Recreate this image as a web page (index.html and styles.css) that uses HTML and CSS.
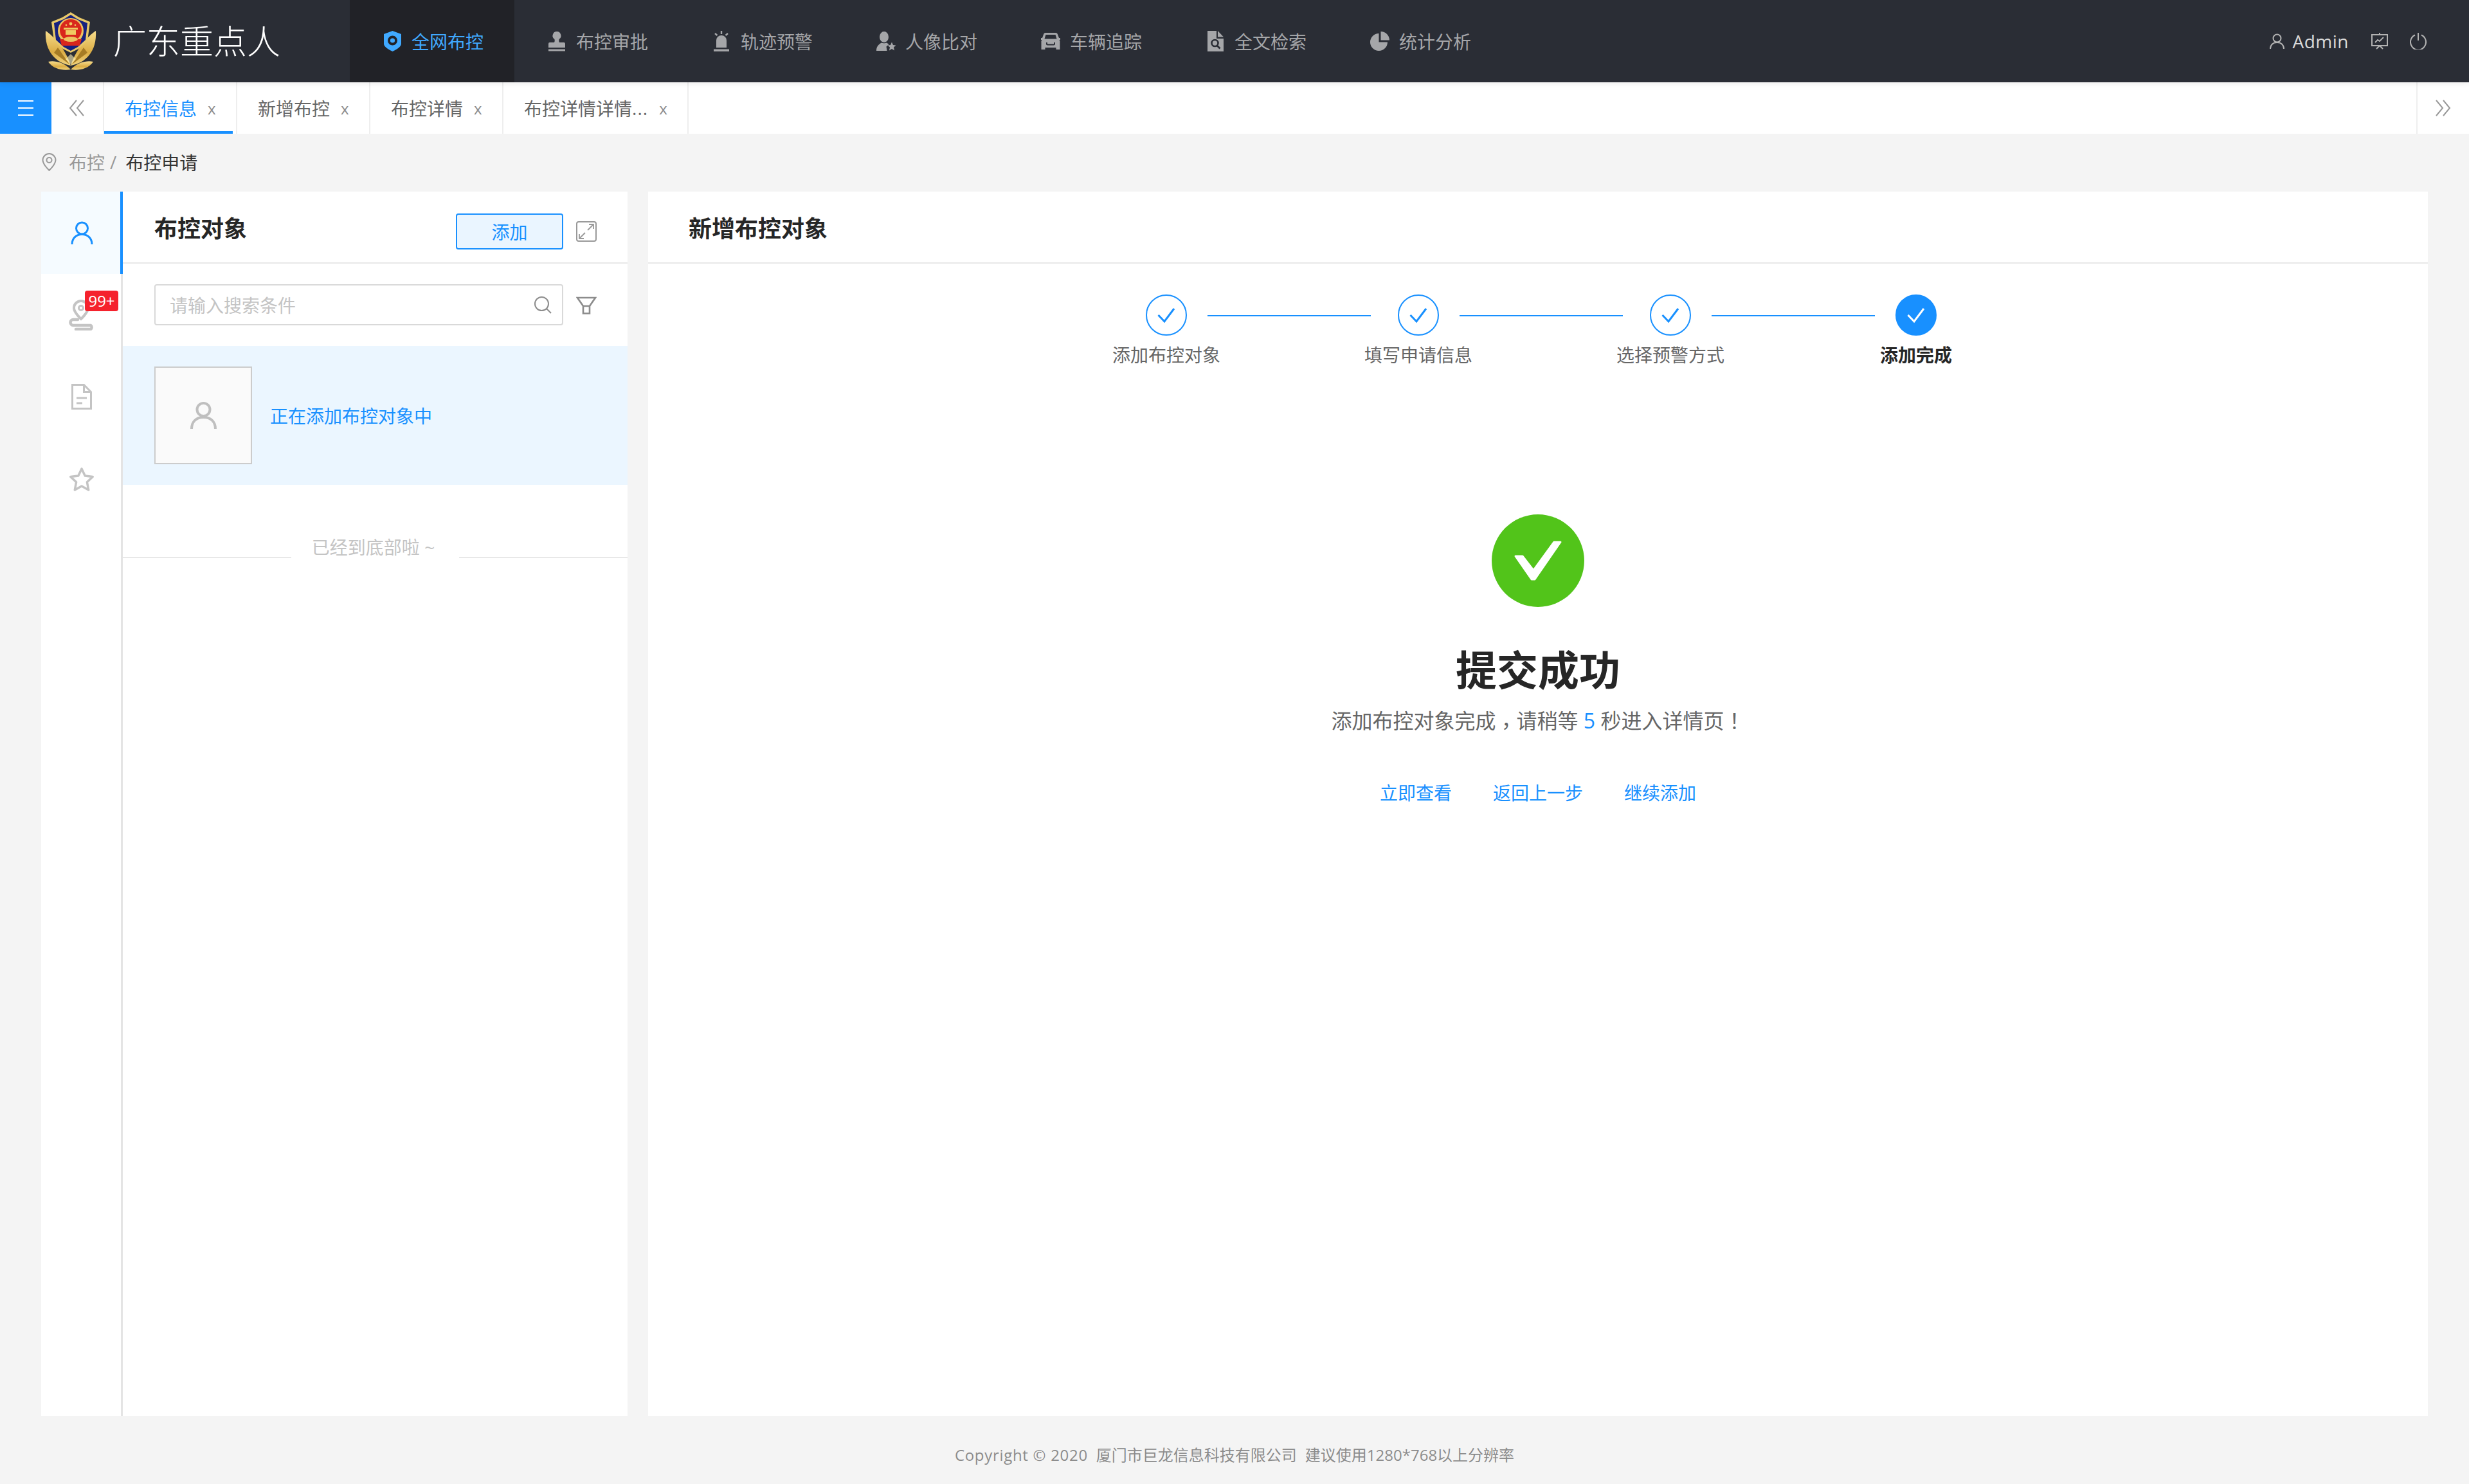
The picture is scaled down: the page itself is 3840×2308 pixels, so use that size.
FILE: index.html
```html
<!DOCTYPE html>
<html lang="zh-CN">
<head>
    <meta charset="UTF-8">
    <meta name="viewport" content="width=device-width, initial-scale=1.0">
    <title>广东重点人 - 布控申请</title>
    <link rel="stylesheet" href="styles.css">
</head>
<body>
    <header class="topbar">
        <div class="brand">
            <svg class="emblem" viewBox="0 0 100 100">
                <defs>
                    <linearGradient id="gold" x1="0" y1="0" x2="0" y2="1">
                        <stop offset="0" stop-color="#f6dc8c"/>
                        <stop offset="0.6" stop-color="#dcae45"/>
                        <stop offset="1" stop-color="#f0d27c"/>
                    </linearGradient>
                </defs>
                <path fill="url(#gold)" d="M50 88C27 84 9 66 11 34c12 8 30 26 39 54z"/>
                <path fill="url(#gold)" d="M50 88c23-4 41-22 39-54-12 8-30 26-39 54z"/>
                <path fill="#a67c25" d="M30 60l18 26-24-18zM70 60L52 86l24-18z"/>
                <path fill="url(#gold)" d="M50 94c-12-12-26-14-35-12 8 12 24 14 35 12zM50 94c12-12 26-14 35-12-8 12-24 14-35 12z"/>
                <path fill="#e8c869" d="M50 5l13 8 17 7-4 30-14 12-12 6-12-6-14-12-4-30 17-7z"/>
                <path fill="#16217f" d="M50 9l11 7 15 6-3 26-12 11-11 6-11-6-12-11-3-26 15-6z"/>
                <circle fill="#edc35f" cx="50" cy="34" r="20"/>
                <circle fill="#d9271c" cx="50" cy="33" r="17"/>
                <rect fill="#f0cc62" x="39" y="29" width="22" height="3"/>
                <rect fill="#f0cc62" x="42" y="33" width="16" height="7"/>
                <circle fill="#f0cc62" cx="50" cy="23" r="2.4"/>
                <circle fill="#f0cc62" cx="43" cy="25" r="1.3"/>
                <circle fill="#f0cc62" cx="57" cy="25" r="1.3"/>
                <path fill="#d9271c" d="M33 47h34l-3 10H36z"/>
                <ellipse fill="#edc35f" cx="50" cy="47" rx="11" ry="4"/>
                <path fill="#fff2b8" d="M42 78l8-8 8 8-8 8z" opacity=".6"/>
            </svg>
            <span class="brand-name">广东重点人</span>
        </div>
        <nav class="main-nav">
            <a class="nav-item active">
                <span class="nav-icon">
                    <svg width="27" height="32" viewBox="0 0 27 32"><path fill="currentColor" d="M13.5 0L27 5v15c0 4-5 8-13.5 12C5 28 0 24 0 20V5z"/><circle cx="13.5" cy="15" r="7.5" fill="#212227"/><circle cx="13.5" cy="15" r="3.6" fill="currentColor"/></svg>
                </span>全网布控
            </a>
            <a class="nav-item">
                <span class="nav-icon">
                    <svg width="26" height="31" viewBox="0 0 26 31"><path fill="currentColor" d="M13 0a6.5 6.5 0 0 1 4 11.6c-1 1.2-1 3.4 0 5.4h7a2 2 0 0 1 2 2v6H0v-6a2 2 0 0 1 2-2h7c1-2 1-4.2 0-5.4A6.5 6.5 0 0 1 13 0z"/><rect y="27.5" width="26" height="3" fill="currentColor"/></svg>
                </span>布控审批
            </a>
            <a class="nav-item">
                <span class="nav-icon">
                    <svg width="24" height="32" viewBox="0 0 24 32"><path fill="currentColor" d="M4 26V15a8 8 0 0 1 16 0v11z"/><rect y="28.5" width="24" height="3.5" fill="currentColor"/><path fill="none" stroke="currentColor" stroke-width="2.4" d="M12 0v5M2 4l3.5 3M22 4l-3.5 3"/></svg>
                </span>轨迹预警
            </a>
            <a class="nav-item">
                <span class="nav-icon">
                    <svg width="30" height="30" viewBox="0 0 30 30"><ellipse fill="currentColor" cx="12" cy="8.5" rx="7" ry="8.5"/><path fill="currentColor" d="M0 30c0-6 3-10 8-12.500 2 1 6 1 8 0l3.500 2.500-4 3.500 1 6.500z"/><path fill="currentColor" d="M24 16.500l2 4.500 4.500.5-3.500 3 1 5-4-2.500-4 2.500 1-5-3.500-3 4.500-.5z"/></svg>
                </span>人像比对
            </a>
            <a class="nav-item">
                <span class="nav-icon">
                    <svg width="30" height="26" viewBox="0 0 30 26"><path fill="currentColor" d="M7 0h16c1.500 0 2.500 1 3 2.500L28 8h2v3h-1.500l1 2v13h-6v-3H6.500v3h-6V13l1-2H0V8h2l2-5.500C4.500 1 5.500 0 7 0z"/><path fill="#2a2d35" d="M7.500 3h15l2 6.500h-19z"/><path fill="none" stroke="#2a2d35" stroke-width="2" d="M9 15v2q0 1.500 1.500 1.500h9q1.500 0 1.500-1.500v-2"/></svg>
                </span>车辆追踪
            </a>
            <a class="nav-item">
                <span class="nav-icon">
                    <svg width="25" height="32" viewBox="0 0 25 32"><path fill="currentColor" d="M0 0h14v12h11v20H0z"/><path fill="currentColor" d="M16 0l9 9.500h-9z"/><circle cx="11.500" cy="19" r="5" fill="none" stroke="#2a2d35" stroke-width="2.600"/><path stroke="#2a2d35" stroke-width="2.800" d="M15 23l4.500 4.500"/></svg>
                </span>全文检索
            </a>
            <a class="nav-item">
                <span class="nav-icon">
                    <svg width="30" height="30" viewBox="0 0 30 30"><path fill="currentColor" d="M13.500 3v13.500H27A13.500 13.500 0 1 1 13.500 3z"/><path fill="currentColor" d="M16.500 0A13.500 13.500 0 0 1 30 13.500H16.500z"/></svg>
                </span>统计分析
            </a>
        </nav>
        <div class="user-tools">
            <svg class="tool-user" width="23" height="24" viewBox="0 0 23 24"><circle cx="11.500" cy="7.500" r="6" fill="none" stroke="currentColor" stroke-width="2"/><path fill="none" stroke="currentColor" stroke-width="2" d="M1 24c0-6 4-10 10.500-10S22 18 22 24"/></svg>
            <span class="user-name">Admin</span>
            <svg class="tool-chart" width="26" height="26" viewBox="0 0 26 26"><path fill="none" stroke="currentColor" stroke-width="2" d="M1 3h24v17H1zM13 0v3M13 20l-5 5M13 20l5 5"/><path fill="none" stroke="currentColor" stroke-width="1.800" d="M6 15l4-4 3 2 6-6"/></svg>
            <svg class="tool-power" width="26" height="26" viewBox="0 0 26 26"><path fill="none" stroke="currentColor" stroke-width="2" d="M8 3.500a12 12 0 1 0 10 0M13 0v12"/></svg>
        </div>
    </header>

    <div class="tabbar">
        <button class="menu-btn">
            <span></span><span></span><span></span>
        </button>
        <div class="tab-arrow left">
            <svg width="24" height="26" viewBox="0 0 24 26"><path fill="none" stroke="currentColor" stroke-width="2" d="M12 1L2 13l10 12M23 1L13 13l10 12"/></svg>
        </div>
        <a class="tab active">布控信息<i>x</i></a>
        <a class="tab">新增布控<i>x</i></a>
        <a class="tab">布控详情<i>x</i></a>
        <a class="tab">布控详情详情<span class="tab-dots">...</span><i>x</i></a>
        <div class="tab-arrow right">
            <svg width="24" height="26" viewBox="0 0 24 26"><path fill="none" stroke="currentColor" stroke-width="2" d="M1 1l10 12L1 25M12 1l10 12-10 12"/></svg>
        </div>
    </div>

    <div class="breadcrumb">
        <svg width="23" height="28" viewBox="0 0 23 28"><path fill="none" stroke="currentColor" stroke-width="2" d="M11.500 1C17 1 21.500 5.500 21.500 11c0 6-10 16-10 16s-10-10-10-16C1.500 5.500 6 1 11.500 1z"/><circle cx="11.500" cy="11" r="4" fill="none" stroke="currentColor" stroke-width="2"/></svg>
        <span class="crumb">布控</span>
        <span class="crumb-sep">/</span>
        <span class="crumb-current">布控申请</span>
    </div>

    <main class="content">
        <section class="left-panel">
            <aside class="side-tabs">
                <div class="side-item active">
                    <svg width="35" height="36" viewBox="0 0 35 36"><circle cx="17.500" cy="11" r="9" fill="none" stroke="currentColor" stroke-width="3"/><path fill="none" stroke="currentColor" stroke-width="3" d="M2 36c0-9 6-15.500 15.500-15.500S33 27 33 36"/></svg>
                </div>
                <div class="side-item">
                    <svg class="route-icon" width="40" height="48" viewBox="0 0 40 48"><path fill="none" stroke="currentColor" stroke-width="4" d="M19 2a11 11 0 0 1 11 11c0 7-11 17-11 17S8 20 8 13A11 11 0 0 1 19 2z"/><circle cx="19" cy="13" r="3.500" fill="none" stroke="currentColor" stroke-width="3"/><path fill="none" stroke="currentColor" stroke-width="4.500" stroke-linecap="round" d="M14 31H7a4.500 4.500 0 0 0 0 9h27a3.500 3.500 0 0 1 0 6H11"/></svg>
                    <span class="badge">99+</span>
                </div>
                <div class="side-item raised">
                    <svg width="32" height="40" viewBox="0 0 32 40"><path fill="none" stroke="currentColor" stroke-width="3" d="M1.500 1.500h18l11 11v26h-29zM19.500 1.500v11h11"/><path fill="none" stroke="currentColor" stroke-width="3" d="M8 22h16M8 30h9"/></svg>
                </div>
                <div class="side-item raised">
                    <svg width="40" height="38" viewBox="0 0 40 38"><path fill="none" stroke="currentColor" stroke-width="3.500" stroke-linejoin="round" d="M20 3l5.200 11 12 1.500-8.800 8.300L30.700 36 20 30l-10.700 6 2.300-12.200L2.800 15.500l12-1.500z"/></svg>
                </div>
            </aside>
            <div class="object-list">
                <div class="panel-head list-head">
                    <h2>布控对象</h2>
                    <button class="add-btn">添加</button>
                    <svg class="expand-icon" width="32" height="32" viewBox="0 0 32 32"><rect x="1" y="1" width="30" height="30" rx="3" fill="none" stroke="currentColor" stroke-width="2"/><path fill="none" stroke="currentColor" stroke-width="1.800" d="M18 14l9-9M20 5h7v7M14 18l-9 9M5 20v7h7"/></svg>
                </div>
                <div class="search-row">
                    <div class="search-box">
                        <span class="placeholder">请输入搜索条件</span>
                        <svg width="28" height="28" viewBox="0 0 28 28"><circle cx="12.500" cy="12.500" r="10.500" fill="none" stroke="currentColor" stroke-width="2"/><path stroke="currentColor" stroke-width="2" d="M20 20l7 7"/></svg>
                    </div>
                    <svg class="filter-icon" width="32" height="28" viewBox="0 0 32 28"><path fill="none" stroke="currentColor" stroke-width="2.600" d="M2 2h28L21 15v11.500H11V15zM11 15h10"/></svg>
                </div>
                <div class="object-row">
                    <div class="avatar">
                        <svg width="41" height="42" viewBox="0 0 41 42"><circle cx="20.500" cy="12" r="10" fill="none" stroke="currentColor" stroke-width="4"/><path fill="none" stroke="currentColor" stroke-width="4" d="M2 42c0-11 7-18 18.500-18S39 31 39 42"/></svg>
                    </div>
                    <span class="object-text">正在添加布控对象中</span>
                </div>
                <div class="list-end">
                    <span class="end-line"></span>
                    <span class="end-text">已经到底部啦 ~</span>
                    <span class="end-line"></span>
                </div>
            </div>
        </section>

        <section class="right-panel">
            <div class="panel-head form-head">
                <h2>新增布控对象</h2>
            </div>
            <div class="steps">
                <div class="step wide">
                    <span class="step-dot"><svg width="64" height="64" viewBox="0 0 64 64"><path fill="none" stroke="currentColor" stroke-width="3" d="M19.500 32l9.500 10 15-20"/></svg></span>
                    <span class="step-label">添加布控对象</span>
                </div>
                <span class="step-line"></span>
                <div class="step wide">
                    <span class="step-dot"><svg width="64" height="64" viewBox="0 0 64 64"><path fill="none" stroke="currentColor" stroke-width="3" d="M19.500 32l9.500 10 15-20"/></svg></span>
                    <span class="step-label">填写申请信息</span>
                </div>
                <span class="step-line"></span>
                <div class="step wide">
                    <span class="step-dot"><svg width="64" height="64" viewBox="0 0 64 64"><path fill="none" stroke="currentColor" stroke-width="3" d="M19.500 32l9.500 10 15-20"/></svg></span>
                    <span class="step-label">选择预警方式</span>
                </div>
                <span class="step-line last"></span>
                <div class="step current">
                    <span class="step-dot"><svg width="64" height="64" viewBox="0 0 64 64"><path fill="none" stroke="currentColor" stroke-width="3" d="M19.500 32l9.500 10 15-20"/></svg></span>
                    <span class="step-label">添加完成</span>
                </div>
            </div>
            <div class="result">
                <svg width="144" height="144" viewBox="0 0 144 144"><circle cx="72" cy="72" r="72" fill="#52c41a"/><path fill="#fff" stroke="#fff" stroke-width="3" stroke-linejoin="round" d="M37 65h11l17 22 32-44h10L67 101h-5z"/></svg>
                <h1>提交成功</h1>
                <p class="result-desc">添加布控对象完成<span class="punct comma" lang="zh-TW">，</span>请稍等 <em>5</em> 秒进入详情页<span class="punct" lang="zh-TW">！</span></p>
                <div class="result-links">
                    <a>立即查看</a>
                    <a>返回上一步</a>
                    <a>继续添加</a>
                </div>
            </div>
        </section>
    </main>

    <footer class="footer">
        <span class="copyright">Copyright © 2020</span>
        <span>厦门市巨龙信息科技有限公司</span>
        <span>建议使用1280*768以上分辨率</span>
    </footer>
</body>
</html>
```

FILE: styles.css
```css
* {
    box-sizing: border-box;
}
html, body {
    height: 100%;
}
body {
    margin: 0;
    display: flex;
    flex-direction: column;
    background-color: #f4f4f4;
    font-family: "Open Sans", "Noto Sans CJK SC", sans-serif;
    font-size: 28px;
    color: #666;
}
h1, h2, p {
    margin: 0;
}
svg {
    display: block;
    flex: none;
}

/* top bar */
.topbar {
    position: relative;
    z-index: 2;
    display: flex;
    align-items: center;
    height: 128px;
    background-color: #2a2d35;
    box-shadow: 0 2px 8px rgba(0, 0, 0, 0.08);
}
.brand {
    display: flex;
    align-items: center;
    width: 544px;
    padding-left: 60px;
}
.emblem {
    width: 100px;
    height: 100px;
}
.brand-name {
    margin-left: 16px;
    font-size: 52px;
    font-weight: 300;
    line-height: 64px;
    color: #fff;
}
.main-nav {
    display: flex;
    height: 100%;
}
.nav-item {
    display: flex;
    align-items: center;
    width: 256px;
    padding-left: 48px;
    color: #a5a6a9;
}
.nav-item.active {
    background-color: #212227;
    color: #40a9ff;
}
.nav-icon {
    display: flex;
    justify-content: center;
    width: 36px;
    margin-right: 12px;
}
.user-tools {
    display: flex;
    align-items: center;
    margin-left: auto;
    padding-right: 66px;
    color: #b3b3b3;
}
.user-name {
    margin: 0 35px 0 13px;
    letter-spacing: 0.5px;
    color: #d9d9d9;
}
.tool-power {
    margin-left: 34px;
}

/* tabs */
.tabbar {
    display: flex;
    height: 80px;
    background-color: #fff;
}
.menu-btn {
    display: flex;
    flex-direction: column;
    justify-content: center;
    gap: 9px;
    width: 80px;
    padding: 0 28px;
    border: 0;
    background-color: #1890ff;
}
.menu-btn span {
    height: 2px;
    background-color: #fff;
}
.tab-arrow {
    display: flex;
    align-items: center;
    justify-content: center;
    color: #999;
}
.tab-arrow.left {
    width: 82px;
    padding-right: 3px;
    border-right: 2px solid #eee;
}
.tab-arrow.right {
    width: 82px;
    margin-left: auto;
    border-left: 2px solid #eee;
}
.tab {
    position: relative;
    display: flex;
    align-items: center;
    padding: 0 31px 0 32px;
    border-right: 2px solid #eee;
    color: #666;
}
.tab i {
    width: 13px;
    margin-left: 17px;
    font-style: normal;
    font-size: 24px;
    color: #8c8c8c;
}
.tab-dots {
    letter-spacing: 1px;
}
.tab.active {
    color: #1890ff;
}
.tab.active::after {
    content: "";
    position: absolute;
    left: 0;
    bottom: 0;
    width: 200px;
    height: 4px;
    background-color: #1890ff;
}

/* breadcrumb */
.breadcrumb {
    display: flex;
    align-items: center;
    height: 90px;
    padding: 0 0 2px 65px;
    color: #999;
}
.crumb {
    margin-left: 19px;
}
.crumb-sep {
    margin: 0 14px 0 8px;
}
.crumb-current {
    color: #333;
}

/* panels */
.content {
    flex: 1;
    display: flex;
    gap: 32px;
    padding: 0 64px;
}
.left-panel {
    display: flex;
    width: 912px;
    background-color: #fff;
}
.right-panel {
    flex: 1;
    background-color: #fff;
}
.side-tabs {
    width: 127px;
    border-right: 3px solid #e4e4e4;
}
.side-item {
    position: relative;
    display: flex;
    align-items: center;
    justify-content: center;
    height: 128px;
    margin-right: -3px;
    padding-left: 3px;
    border-right: 4px solid transparent;
    color: #c4c4c4;
}
.side-item.active {
    border-right-color: #1890ff;
    background-color: #f5fbff;
    color: #1890ff;
}
.side-item.raised {
    padding-bottom: 3px;
}
.badge {
    position: absolute;
    top: 26px;
    left: 68px;
    width: 52px;
    height: 32px;
    border-radius: 4px;
    background-color: #f5222d;
    color: #fff;
    font-size: 24px;
    line-height: 32px;
    text-align: center;
}
.panel-head {
    display: flex;
    align-items: center;
    height: 112px;
    border-bottom: 2px solid #e8e8e8;
}
.panel-head h2 {
    font-size: 36px;
    font-weight: 700;
    color: #262626;
}
.object-list {
    flex: 1;
}
.list-head {
    padding: 0 48px 0 49px;
}
.add-btn {
    width: 167px;
    height: 56px;
    margin: 14px 0 0 auto;
    border: 2px solid #1890ff;
    border-radius: 4px;
    background-color: #eaf5ff;
    color: #1890ff;
    font-family: inherit;
    font-size: 28px;
}
.expand-icon {
    margin: 14px 0 0 20px;
    color: #999;
}
.search-row {
    display: flex;
    align-items: center;
    padding: 32px 48px 32px 49px;
}
.search-box {
    flex: 1;
    display: flex;
    align-items: center;
    justify-content: space-between;
    height: 64px;
    padding: 0 16px 0 22px;
    border: 2px solid #d9d9d9;
    border-radius: 4px;
    color: #8c8c8c;
}
.placeholder {
    color: #c4c4c4;
}
.filter-icon {
    margin: 2px 0 0 20px;
    color: #8c8c8c;
}
.object-row {
    display: flex;
    align-items: center;
    gap: 28px;
    height: 216px;
    padding: 0 49px;
    background-color: #ebf6ff;
}
.avatar {
    display: flex;
    align-items: center;
    justify-content: center;
    width: 152px;
    height: 152px;
    border: 2px solid #ccc;
    background-color: #fafafa;
    color: #bfbfbf;
}
.object-text {
    color: #1890ff;
}
.list-end {
    display: flex;
    align-items: flex-end;
    margin-top: 77px;
}
.end-line {
    flex: 1;
    height: 2px;
    margin-bottom: 3px;
    background-color: #e8e8e8;
}
.end-text {
    padding: 0 38px 0 32px;
    color: #c4c4c4;
    line-height: 40px;
}
.form-head {
    padding-left: 63px;
}

/* steps */
.steps {
    display: flex;
    justify-content: center;
    padding: 48px 18px 0 0;
}
.step {
    display: flex;
    flex-direction: column;
    align-items: center;
}
.step.wide {
    width: 168px;
}
.step.current {
    width: 112px;
}
.step-dot {
    width: 64px;
    height: 64px;
    border: 2px solid #1890ff;
    border-radius: 50%;
    color: #1890ff;
}
.step-dot svg {
    margin: -2px;
}
.step.current .step-dot {
    background-color: #1890ff;
    color: #fff;
}
.step-label {
    margin-top: 10px;
    line-height: 40px;
    white-space: nowrap;
}
.step.current .step-label {
    color: #262626;
    font-weight: 700;
}
.step-line {
    width: 254px;
    height: 2px;
    margin: 32px -10px 0 -20px;
    background-color: #1890ff;
}
.step-line.last {
    margin-right: 8px;
}

/* result */
.result {
    display: flex;
    flex-direction: column;
    align-items: center;
    margin-top: 228px;
}
.result h1 {
    margin-top: 53px;
    font-size: 64px;
    font-weight: 700;
    line-height: 90px;
    color: #262626;
}
.result-desc {
    margin-top: 12px;
    font-size: 32px;
    line-height: 44px;
}
.result-desc em {
    font-style: normal;
    color: #1890ff;
}
.punct {
    font-family: "Noto Sans CJK TC", sans-serif;
    line-height: 1;
}
.comma {
    vertical-align: -8px;
}
.result-links {
    display: flex;
    gap: 64px;
    margin-top: 70px;
    line-height: 40px;
    color: #1890ff;
}

/* footer */
.footer {
    display: flex;
    justify-content: center;
    gap: 13px;
    height: 106px;
    padding-top: 43px;
    font-size: 24px;
    line-height: 36px;
    color: #8c8c8c;
}
.copyright {
    letter-spacing: 0.7px;
}
```
